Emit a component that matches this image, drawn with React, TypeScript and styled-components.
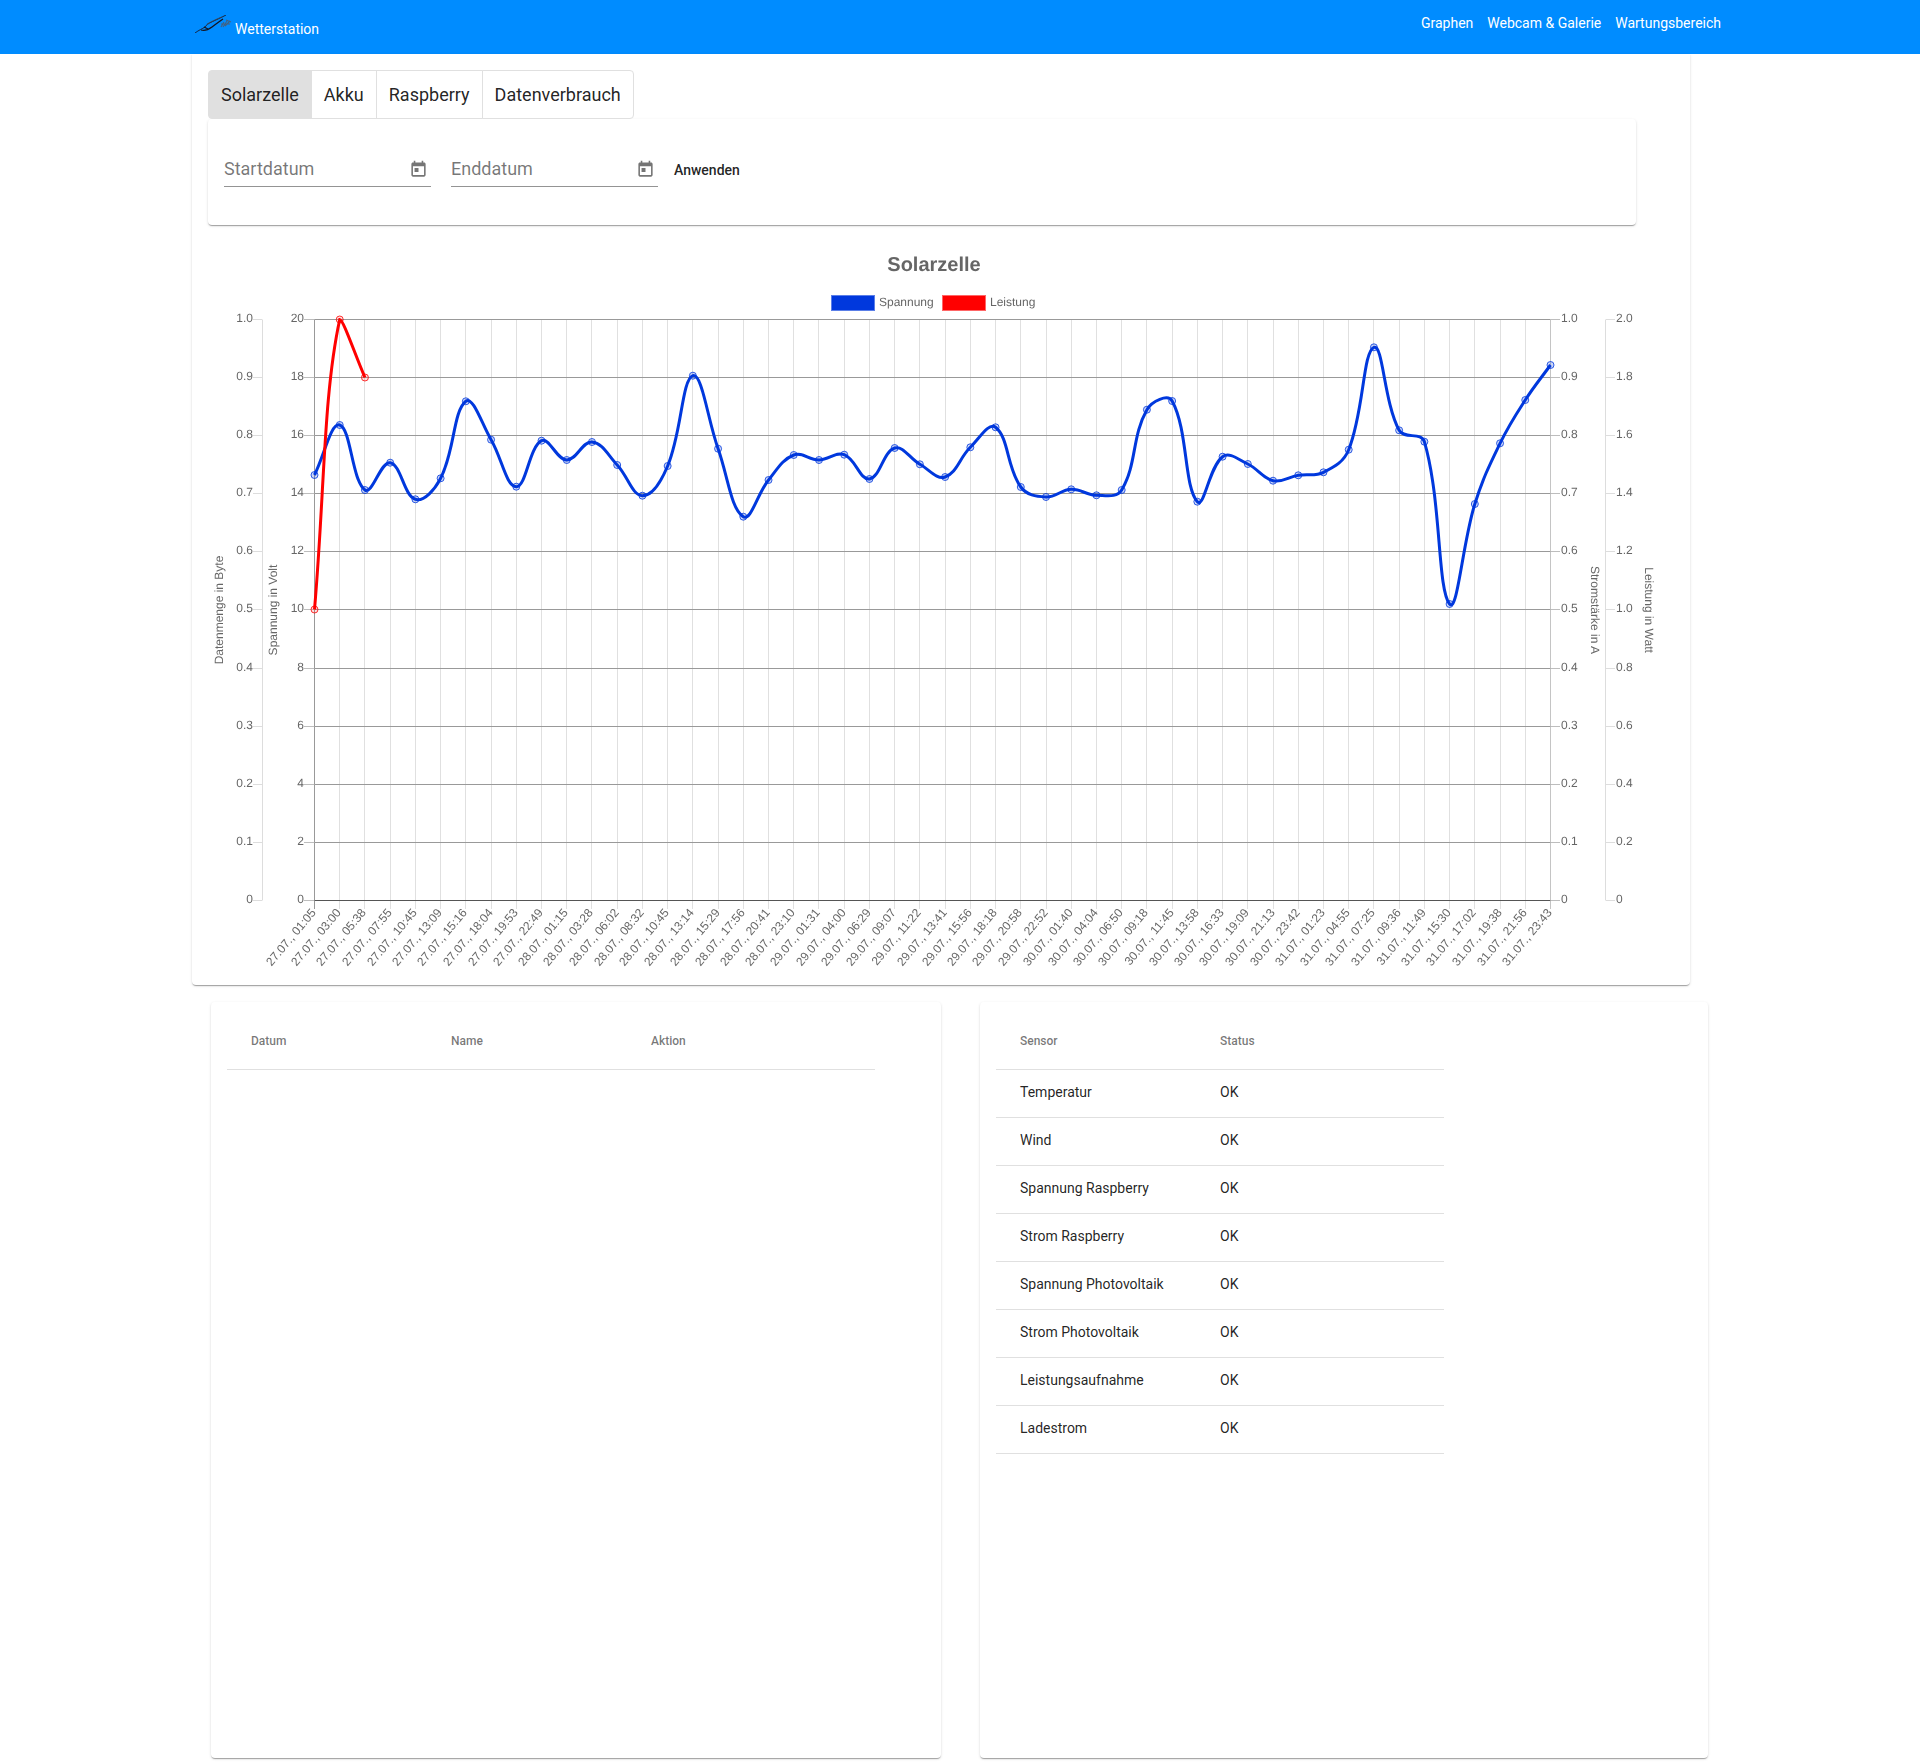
import React from "react";
import styled, { createGlobalStyle } from "styled-components";

const TOP = 319.5;
const STEP_Y = 58.09;
const LEFT = 314.5;
const RIGHT = 1550.5;
const BOTTOM = 900.5;
const STEP_X = (RIGHT - LEFT) / 49;

const LABELS = [
  "27.07., 01:05", "27.07., 03:00", "27.07., 05:38", "27.07., 07:55", "27.07., 10:45",
  "27.07., 13:09", "27.07., 15:16", "27.07., 18:04", "27.07., 19:53", "27.07., 22:49",
  "28.07., 01:15", "28.07., 03:28", "28.07., 06:02", "28.07., 08:32", "28.07., 10:45",
  "28.07., 13:14", "28.07., 15:29", "28.07., 17:56", "28.07., 20:41", "28.07., 23:10",
  "29.07., 01:31", "29.07., 04:00", "29.07., 06:29", "29.07., 09:07", "29.07., 11:22",
  "29.07., 13:41", "29.07., 15:56", "29.07., 18:18", "29.07., 20:58", "29.07., 22:52",
  "30.07., 01:40", "30.07., 04:04", "30.07., 06:50", "30.07., 09:18", "30.07., 11:45",
  "30.07., 13:58", "30.07., 16:33", "30.07., 19:09", "30.07., 21:13", "30.07., 23:42",
  "31.07., 01:23", "31.07., 04:55", "31.07., 07:25", "31.07., 09:36", "31.07., 11:49",
  "31.07., 15:30", "31.07., 17:02", "31.07., 19:38", "31.07., 21:56", "31.07., 23:43",
];

// y pixel of each reading, read off the picture
const VOLTAGE = [
  475, 425, 490, 462.7, 499.3, 478.3, 401.3, 439.7, 486.7, 440.7,
  460, 442, 465, 495.7, 466, 375.7, 448.7, 516.7, 480, 455,
  460, 454.7, 479, 448, 464.3, 477, 447.3, 427.3, 487, 497,
  489.3, 495.3, 490, 409.7, 401, 501.7, 456.7, 464, 480.7, 475.3,
  472.3, 449.7, 347.3, 430.3, 441.7, 604, 504, 443.3, 400, 365,
];
const POWER = [609.5, 319.5, 377.5];

const AXIS_A = ["1.0", "0.9", "0.8", "0.7", "0.6", "0.5", "0.4", "0.3", "0.2", "0.1", "0"];
const AXIS_B = ["20", "18", "16", "14", "12", "10", "8", "6", "4", "2", "0"];
const AXIS_C = ["2.0", "1.8", "1.6", "1.4", "1.2", "1.0", "0.8", "0.6", "0.4", "0.2", "0"];

const SENSORS = [
  "Temperatur",
  "Wind",
  "Spannung Raspberry",
  "Strom Raspberry",
  "Spannung Photovoltaik",
  "Strom Photovoltaik",
  "Leistungsaufnahme",
  "Ladestrom",
];

const xAt = (i: number) => Math.floor(LEFT + i * STEP_X) + 0.5;
const gridY = (i: number) => Math.floor(TOP + i * STEP_Y) + 0.5;
const clampX = (v: number) => Math.min(RIGHT, Math.max(LEFT, v));
const clampY = (v: number) => Math.min(BOTTOM, Math.max(TOP, v));

// same bezier as the chart library: tension 0.4, control points kept in the plot
function splinePath(ys: number[]): string {
  const pts = ys.map((y, i) => ({ x: LEFT + i * STEP_X, y }));
  const ctrl = pts.map((p, i) => {
    const a = pts[i - 1] || p;
    const b = pts[i + 1] || p;
    const d01 = Math.hypot(p.x - a.x, p.y - a.y);
    const d12 = Math.hypot(b.x - p.x, b.y - p.y);
    const sum = d01 + d12 || 1;
    const fa = (0.4 * d01) / sum;
    const fb = (0.4 * d12) / sum;
    return {
      px: clampX(p.x - fa * (b.x - a.x)),
      py: clampY(p.y - fa * (b.y - a.y)),
      nx: clampX(p.x + fb * (b.x - a.x)),
      ny: clampY(p.y + fb * (b.y - a.y)),
    };
  });
  let d = `M${pts[0].x} ${pts[0].y}`;
  for (let i = 1; i < pts.length; i++) {
    d += ` C${ctrl[i - 1].nx} ${ctrl[i - 1].ny} ${ctrl[i].px} ${ctrl[i].py} ${pts[i].x} ${pts[i].y}`;
  }
  return d;
}

const GlobalStyle = createGlobalStyle`
  html, body {
    margin: 0;
    padding: 0;
    background: #fff;
    font-family: Roboto, "Liberation Sans", sans-serif;
  }
`;

const TopBar = styled.header`
  display: flex;
  justify-content: space-between;
  height: 54px;
  padding: 0 199px 0 195px;
  background: #008cff;
  color: #fff;
  font-size: 14px;
  font-weight: 400;
`;

const Brand = styled.div`
  display: flex;
  align-items: flex-start;
  gap: 3px;
  padding-top: 15px;
  span {
    margin-top: 5px;
    line-height: 18px;
  }
`;

const Nav = styled.nav`
  display: flex;
  gap: 14px;
  padding-top: 14px;
  line-height: 18px;
`;

const ChartCard = styled.section`
  box-sizing: border-box;
  width: 1498px;
  height: 931px;
  margin-left: 192px;
  padding-top: 16px;
  border-radius: 0 0 4px 4px;
  box-shadow: 0 2px 1px -1px rgba(0, 0, 0, 0.2), 0 1px 1px 0 rgba(0, 0, 0, 0.14),
    0 1px 3px 0 rgba(0, 0, 0, 0.12);
`;

const Tabs = styled.div`
  display: inline-flex;
  height: 49px;
  margin-left: 16px;
  vertical-align: top;
`;

const Tab = styled.button<{ $active?: boolean }>`
  box-sizing: border-box;
  height: 49px;
  margin-left: -1px;
  padding: 0 12px;
  border: 1px solid #e0e0e0;
  background: ${(p) => (p.$active ? "#e0e0e0" : "#fff")};
  color: rgba(0, 0, 0, 0.87);
  font: 400 18px Roboto, sans-serif;
  &:first-child {
    margin-left: 0;
    border-radius: 4px 0 0 4px;
  }
  &:last-child {
    border-radius: 0 4px 4px 0;
  }
`;

const FilterCard = styled.div`
  box-sizing: border-box;
  display: flex;
  align-items: flex-start;
  width: 1428px;
  height: 106px;
  margin-left: 16px;
  padding: 33px 16px 0;
  border-radius: 4px;
  box-shadow: 0 2px 1px -1px rgba(0, 0, 0, 0.2), 0 1px 1px 0 rgba(0, 0, 0, 0.14),
    0 1px 3px 0 rgba(0, 0, 0, 0.12);
`;

const DateField = styled.div`
  box-sizing: border-box;
  display: flex;
  align-items: center;
  justify-content: space-between;
  width: 207px;
  height: 35px;
  margin-right: 20px;
  padding: 0 3px 2px 0;
  border-bottom: 1px solid #949494;
  color: rgba(0, 0, 0, 0.54);
  font-size: 18px;
  svg {
    width: 19px;
    height: 19px;
    margin-top: 2px;
    fill: rgba(0, 0, 0, 0.54);
  }
`;

const ApplyButton = styled.button`
  margin: 3px 0 0 -4px;
  padding: 6px 0;
  border: 0;
  background: none;
  color: rgba(0, 0, 0, 0.87);
  font: 500 14px/18px Roboto, sans-serif;
`;

const ChartSvg = styled.svg`
  display: block;
  will-change: transform;
  text {
    font-family: "Liberation Sans", Arial, sans-serif;
    font-size: 12px;
    fill: #666;
    text-rendering: geometricPrecision;
  }
  .title {
    font-size: 20px;
    font-weight: 700;
  }
`;

const TablesRow = styled.div`
  display: flex;
  gap: 39px;
  margin: 17px 0 6px 211px;
`;

const TableCard = styled.section<{ $width: number }>`
  box-sizing: border-box;
  width: ${(p) => p.$width}px;
  height: 756px;
  padding: 11px 16px 0;
  border-radius: 4px;
  box-shadow: 0 2px 1px -1px rgba(0, 0, 0, 0.2), 0 1px 1px 0 rgba(0, 0, 0, 0.14),
    0 1px 3px 0 rgba(0, 0, 0, 0.12);
`;

const DataTable = styled.table<{ $width: number }>`
  width: ${(p) => p.$width}px;
  table-layout: fixed;
  border-collapse: collapse;
  th,
  td {
    box-sizing: border-box;
    width: 200px;
    padding: 0 0 0 24px;
    border-bottom: 1px solid #e0e0e0;
    text-align: left;
  }
  th {
    height: 56px;
    color: rgba(0, 0, 0, 0.54);
    font-size: 12px;
    font-weight: 500;
  }
  td {
    height: 48px;
    padding-bottom: 2px;
    color: rgba(0, 0, 0, 0.87);
    font-size: 14px;
  }
  th:last-child {
    width: auto;
  }
`;

function Logo() {
  return (
    <svg width="37" height="18" viewBox="0 0 37 18" fill="none">
      <path d="M0 18 C4 15 7 14 10 12 C12 8 20 6 31 0" stroke="#1a1a2a" strokeWidth="0.9" />
      <path d="M6 15 C9 16 13 15 17 12 C21 9 25 6 28 4 M9 12 L13 14" stroke="#14141f" strokeWidth="1.3" />
      <path d="M12 9 C16 7 21 4 27 2" stroke="#3b4656" strokeWidth="0.8" />
      <path d="M26 12 L29 7 M28 12 L32 6 M30 11 L35 6 M26 9 L35 9 M31 5 L36 7" stroke="#44617f" strokeWidth="1.1" />
    </svg>
  );
}

function CalendarIcon() {
  return (
    <svg viewBox="0 0 24 24">
      <path d="M19 3h-1V1h-2v2H8V1H6v2H5c-1.11 0-1.99.9-1.99 2L3 19c0 1.1.89 2 2 2h14c1.1 0 2-.9 2-2V5c0-1.1-.9-2-2-2zm0 16H5V8h14v11zM7 10h5v5H7z" />
    </svg>
  );
}

function Markers({ ys, fill, stroke }: { ys: number[]; fill: string; stroke: string }) {
  return (
    <>
      {ys.map((y, i) => (
        <circle key={i} cx={LEFT + i * STEP_X} cy={y} r={3.5} fill={fill} stroke={stroke} />
      ))}
    </>
  );
}

function SolarChart() {
  const rows = AXIS_A.map((_, i) => gridY(i));
  const columns = LABELS.map((_, i) => xAt(i));

  return (
    <ChartSvg width="1498" height="760" viewBox="192 225 1498 760">
      <text className="title" x="934" y="271" textAnchor="middle">
        Solarzelle
      </text>

      <rect x="831.5" y="295.5" width="43" height="15" fill="#0038dd" stroke="#5b7fe8" />
      <text x="879" y="306">Spannung</text>
      <rect x="942.5" y="295.5" width="43" height="15" fill="#ff0000" stroke="#ff6666" />
      <text x="990" y="306">Leistung</text>

      {columns.map((x, i) => (
        <line key={i} x1={x} x2={x} y1={TOP} y2={909} stroke="#e0e0e0" />
      ))}
      <line x1={columns[0]} x2={columns[0]} y1={TOP} y2={909} stroke="#999" />
      <line x1={columns[49]} x2={columns[49]} y1={TOP} y2={909} stroke="#c4c4c4" />

      {rows.map((y, i) => (
        <g key={i}>
          <line x1="304" x2={LEFT} y1={y} y2={y} stroke="#bdbdbd" />
          <line x1={LEFT} x2={RIGHT} y1={y} y2={y} stroke={i === 10 ? "#555" : "#999"} />
          <line x1={RIGHT} x2="1560" y1={y} y2={y} stroke="#bdbdbd" />
          <line x1="253" x2="262" y1={y} y2={y} stroke="#ddd" />
          <line x1="1606" x2="1615" y1={y} y2={y} stroke="#ddd" />
          <text x="253" y={y + 2.5} textAnchor="end">{AXIS_A[i]}</text>
          <text x="304" y={y + 2.5} textAnchor="end">{AXIS_B[i]}</text>
          <text x="1561" y={y + 2.5}>{AXIS_A[i]}</text>
          <text x="1616" y={y + 2.5}>{AXIS_C[i]}</text>
        </g>
      ))}
      <line x1="262.5" x2="262.5" y1={TOP} y2={BOTTOM} stroke="#ddd" />
      <line x1="1605.5" x2="1605.5" y1={TOP} y2={BOTTOM} stroke="#ddd" />

      <text transform="translate(223 610) rotate(-90)" textAnchor="middle">Datenmenge in Byte</text>
      <text transform="translate(277 610) rotate(-90)" textAnchor="middle">Spannung in Volt</text>
      <text transform="translate(1591 610) rotate(90)" textAnchor="middle">Stromstärke in A</text>
      <text transform="translate(1645 610) rotate(90)" textAnchor="middle">Leistung in Watt</text>

      {LABELS.map((label, i) => (
        <text key={i} transform={`translate(${columns[i] + 2} 913) rotate(-50)`} textAnchor="end">
          {label}
        </text>
      ))}

      <path d={splinePath(VOLTAGE)} fill="none" stroke="#0038dd" strokeWidth="3" />
      <Markers ys={VOLTAGE} fill="rgba(0,56,221,0.2)" stroke="rgba(0,56,221,0.8)" />
      <path d={splinePath(POWER)} fill="none" stroke="#ff0000" strokeWidth="3" />
      <Markers ys={POWER} fill="rgba(255,0,0,0.12)" stroke="rgba(255,0,0,0.8)" />
    </ChartSvg>
  );
}

export default function App(): JSX.Element {
  return (
    <>
      <GlobalStyle />
      <TopBar>
        <Brand>
          <Logo />
          <span>Wetterstation</span>
        </Brand>
        <Nav>
          <div>Graphen</div>
          <div>Webcam &amp; Galerie</div>
          <div>Wartungsbereich</div>
        </Nav>
      </TopBar>

      <ChartCard>
        <Tabs>
          <Tab $active>Solarzelle</Tab>
          <Tab>Akku</Tab>
          <Tab>Raspberry</Tab>
          <Tab>Datenverbrauch</Tab>
        </Tabs>
        <FilterCard>
          <DateField>
            Startdatum
            <CalendarIcon />
          </DateField>
          <DateField>
            Enddatum
            <CalendarIcon />
          </DateField>
          <ApplyButton>Anwenden</ApplyButton>
        </FilterCard>
        <SolarChart />
      </ChartCard>

      <TablesRow>
        <TableCard $width={730}>
          <DataTable $width={648}>
            <thead>
              <tr>
                <th>Datum</th>
                <th>Name</th>
                <th>Aktion</th>
              </tr>
            </thead>
          </DataTable>
        </TableCard>
        <TableCard $width={728}>
          <DataTable $width={448}>
            <thead>
              <tr>
                <th>Sensor</th>
                <th>Status</th>
              </tr>
            </thead>
            <tbody>
              {SENSORS.map((name) => (
                <tr key={name}>
                  <td>{name}</td>
                  <td>OK</td>
                </tr>
              ))}
            </tbody>
          </DataTable>
        </TableCard>
      </TablesRow>
    </>
  );
}
